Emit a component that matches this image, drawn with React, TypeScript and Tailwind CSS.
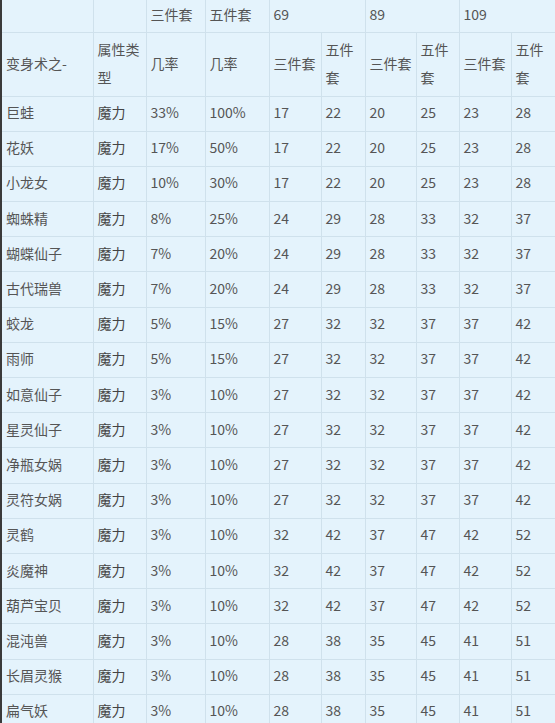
import React from "react";

const rows: [string, string, string, string, number, number, number, number, number, number][] = [
  ["巨蛙", "魔力", "33%", "100%", 17, 22, 20, 25, 23, 28],
  ["花妖", "魔力", "17%", "50%", 17, 22, 20, 25, 23, 28],
  ["小龙女", "魔力", "10%", "30%", 17, 22, 20, 25, 23, 28],
  ["蜘蛛精", "魔力", "8%", "25%", 24, 29, 28, 33, 32, 37],
  ["蝴蝶仙子", "魔力", "7%", "20%", 24, 29, 28, 33, 32, 37],
  ["古代瑞兽", "魔力", "7%", "20%", 24, 29, 28, 33, 32, 37],
  ["蛟龙", "魔力", "5%", "15%", 27, 32, 32, 37, 37, 42],
  ["雨师", "魔力", "5%", "15%", 27, 32, 32, 37, 37, 42],
  ["如意仙子", "魔力", "3%", "10%", 27, 32, 32, 37, 37, 42],
  ["星灵仙子", "魔力", "3%", "10%", 27, 32, 32, 37, 37, 42],
  ["净瓶女娲", "魔力", "3%", "10%", 27, 32, 32, 37, 37, 42],
  ["灵符女娲", "魔力", "3%", "10%", 27, 32, 32, 37, 37, 42],
  ["灵鹤", "魔力", "3%", "10%", 32, 42, 37, 47, 42, 52],
  ["炎魔神", "魔力", "3%", "10%", 32, 42, 37, 47, 42, 52],
  ["葫芦宝贝", "魔力", "3%", "10%", 32, 42, 37, 47, 42, 52],
  ["混沌兽", "魔力", "3%", "10%", 28, 38, 35, 45, 41, 51],
  ["长眉灵猴", "魔力", "3%", "10%", 28, 38, 35, 45, 41, 51],
  ["扁气妖", "魔力", "3%", "10%", 28, 38, 35, 45, 41, 51],
];

const td = "border border-[#cfe1ec] px-[4px] pt-0 pb-[3px] align-middle text-left font-normal";

export default function App() {
  return (
    <div
      className="w-[555px] h-[723px] overflow-hidden bg-[#e4f3fc] text-[14px] leading-[28px] text-[#555]"
      style={{ fontFamily: '"Noto Sans CJK SC", "Noto Sans", sans-serif' }}
    >
      <table className="border-collapse table-fixed w-[555px] border-l-[2px] border-l-[#3a3a3a]">
        <colgroup>
          <col className="w-[92px]" />
          <col className="w-[53px]" />
          <col className="w-[59px]" />
          <col className="w-[64px]" />
          <col className="w-[52px]" />
          <col className="w-[44px]" />
          <col className="w-[51px]" />
          <col className="w-[43px]" />
          <col className="w-[52px]" />
          <col className="w-[45px]" />
        </colgroup>
        <tbody>
          <tr className="h-[32px]">
            <td className={`${td} border-l-[2px] border-l-[#3a3a3a] border-t-0`}></td>
            <td className={`${td} border-t-0`}></td>
            <td className={`${td} border-t-0`}>三件套</td>
            <td className={`${td} border-t-0`}>五件套</td>
            <td className={`${td} border-t-0`} colSpan={2}>69</td>
            <td className={`${td} border-t-0`} colSpan={2}>89</td>
            <td className={`${td} border-t-0 border-r-0`} colSpan={2}>109</td>
          </tr>
          <tr className="h-[64px]">
            <td className={`${td} border-l-[2px] border-l-[#3a3a3a]`}>变身术之-</td>
            <td className={td}>属性类型</td>
            <td className={td}>几率</td>
            <td className={td}>几率</td>
            <td className={td}>三件套</td>
            <td className={td}>五件套</td>
            <td className={td}>三件套</td>
            <td className={td}>五件套</td>
            <td className={td}>三件套</td>
            <td className={`${td} border-r-0`}>五件套</td>
          </tr>
          {rows.map((r) => (
            <tr key={r[0]} className="h-[35.2px]">
              <td className={`${td} border-l-[2px] border-l-[#3a3a3a]`}>{r[0]}</td>
              <td className={`${td} text-[#444]`}>{r[1]}</td>
              <td className={td}>{r[2]}</td>
              <td className={td}>{r[3]}</td>
              <td className={td}>{r[4]}</td>
              <td className={td}>{r[5]}</td>
              <td className={td}>{r[6]}</td>
              <td className={td}>{r[7]}</td>
              <td className={td}>{r[8]}</td>
              <td className={`${td} border-r-0`}>{r[9]}</td>
            </tr>
          ))}
        </tbody>
      </table>
    </div>
  );
}
